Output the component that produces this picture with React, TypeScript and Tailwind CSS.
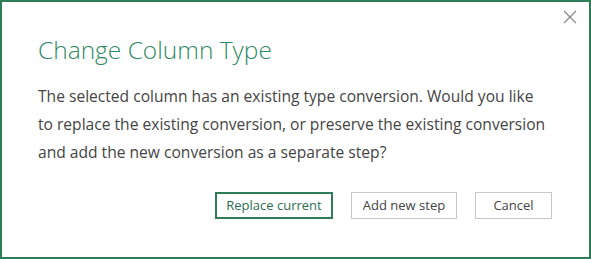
import React from "react";

export default function App() {
  return (
    <div className="w-[591px] h-[259px] bg-white">
      <div
        className="relative w-full h-full border-2 border-[#2e7d58] bg-white flex flex-col pl-[36px] pr-[37px]"
        style={{ fontFamily: '"Open Sans", "Noto Sans", sans-serif' }}
      >
        {/* Close */}
        <button className="absolute top-[7px] right-[11px] w-[16px] h-[16px] flex items-center justify-center">
          <svg width="14" height="14" viewBox="0 0 14 14">
            <path d="M1 1L13 13M13 1L1 13" stroke="#8a8a8a" strokeWidth="1.3" fill="none" />
          </svg>
        </button>

        <h1 className="mt-[32px] text-[24.5px] leading-[32px] font-light text-[#2f8a63]">
          Change Column Type
        </h1>

        <p className="mt-[16px] text-[15.6px] leading-[28px] text-[#444444]">
          The selected column has an existing type conversion. Would you like to replace the existing
          conversion, or preserve the existing conversion and add the new conversion as a separate step?
        </p>

        <div className="mt-[26px] flex justify-end gap-[18px]">
          <button className="h-[27px] w-[118px] border-2 border-[#2e7d58] text-[13px] text-[#2e6e50]">
            Replace current
          </button>
          <button className="h-[27px] w-[106px] border border-[#c8c8c8] text-[13px] text-[#444444]">
            Add new step
          </button>
          <button className="h-[27px] w-[77px] border border-[#c8c8c8] text-[13px] text-[#444444]">
            Cancel
          </button>
        </div>
      </div>
    </div>
  );
}
